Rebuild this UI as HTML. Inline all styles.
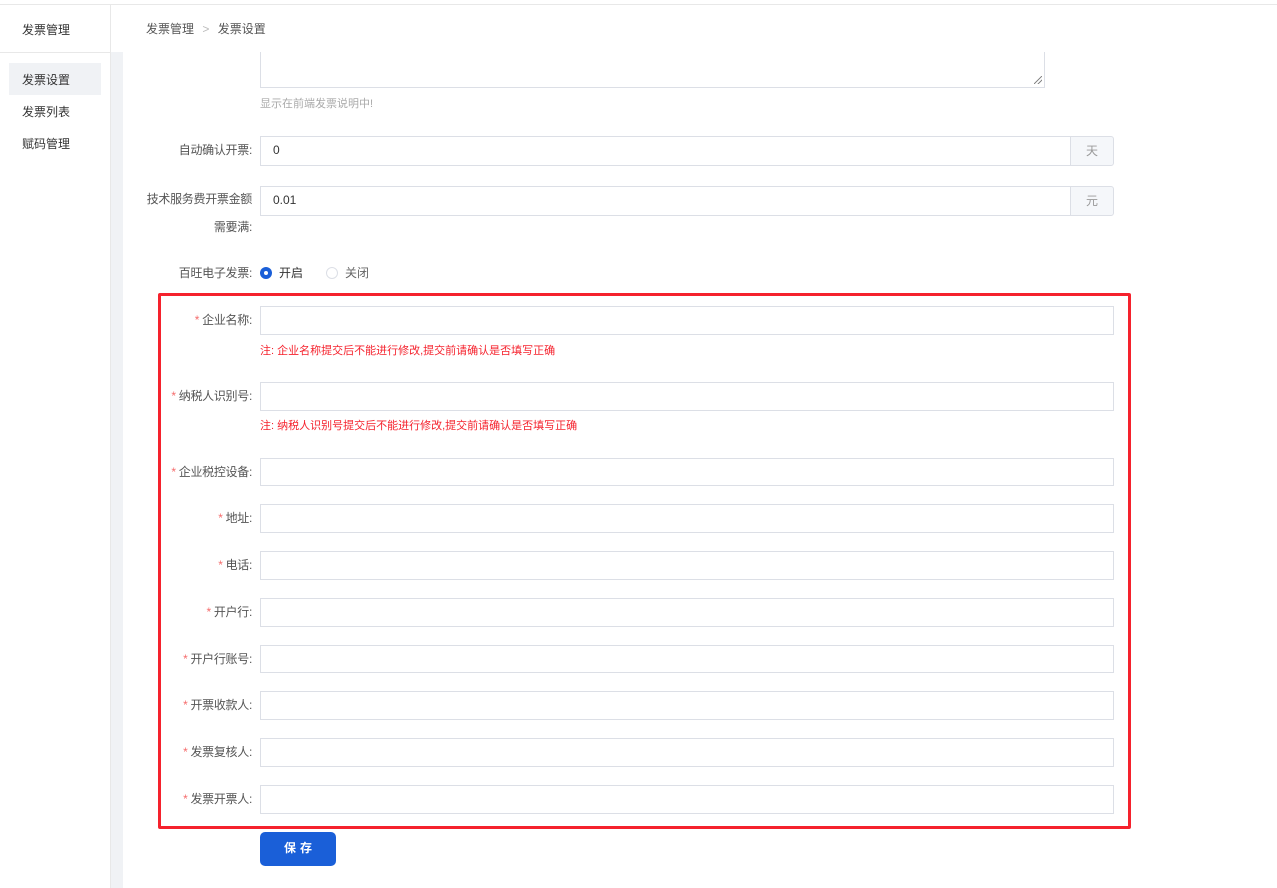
<!DOCTYPE html>
<html><head><meta charset="utf-8"><style>
*{margin:0;padding:0;box-sizing:border-box}
body{width:1277px;height:888px;background:#fff;font-family:"Liberation Sans","Noto Sans CJK SC",sans-serif;font-size:12px;color:#333;position:relative;overflow:hidden}
.a{position:absolute}
.inp{position:absolute;left:260px;width:854px;border:1px solid #dcdfe6;background:#fff}
.lbl{position:absolute;right:1025px;text-align:right;white-space:nowrap;color:#555;font-size:12px;letter-spacing:-0.3px}
.lbl b{color:#f56c6c;font-weight:normal;margin-right:3px}
.note{position:absolute;left:260px;color:#f5222d;font-size:11px}
.add{position:absolute;left:1070px;width:44px;height:30px;border:1px solid #dcdfe6;background:#f5f7fa;border-radius:0 3px 3px 0;color:#999;text-align:center;line-height:28px}
</style></head><body>
<div class="a" style="left:0;top:4px;width:1277px;height:1px;background:#e8e8e8"></div>
<div class="a" style="left:110px;top:5px;width:1px;height:883px;background:#e8e8e8"></div>
<div class="a" style="left:0;top:52px;width:110px;height:1px;background:#e8e8e8"></div>
<div class="a" style="left:111px;top:52px;width:12px;height:836px;background:#f0f2f5"></div>
<div class="a" style="left:22px;top:21px;color:#333">发票管理</div>
<div class="a" style="left:9px;top:63px;width:92px;height:32px;background:#f0f2f5"></div>
<div class="a" style="left:22px;top:71px">发票设置</div>
<div class="a" style="left:22px;top:103px">发票列表</div>
<div class="a" style="left:22px;top:135px">赋码管理</div>
<div class="a" style="left:146px;top:20px;color:#555">发票管理 <span style="color:#bbb;margin:0 5px">&gt;</span> 发票设置</div>

<div class="a" style="left:260px;top:52px;width:785px;height:36px;border:1px solid #dcdfe6;border-top:none"></div>
<div class="a" style="left:1034px;top:76px;width:8px;height:8px;background:linear-gradient(135deg,transparent 45%,#888 45%,#888 55%,transparent 55%,transparent 70%,#888 70%,#888 80%,transparent 80%)"></div>
<div class="a" style="left:260px;top:95px;color:#aaa;font-size:11px">显示在前端发票说明中!</div>

<div class="lbl" style="top:141px">自动确认开票:</div>
<div class="inp" style="top:136px;height:30px;width:811px;padding-left:12px;line-height:27px">0</div>
<div class="add" style="top:136px">天</div>

<div class="lbl" style="top:185px;line-height:28px">技术服务费开票金额<br>需要满:</div>
<div class="inp" style="top:186px;height:30px;width:811px;padding-left:12px;line-height:27px">0.01</div>
<div class="add" style="top:186px">元</div>

<div class="lbl" style="top:264px">百旺电子发票:</div>
<div class="a" style="left:260px;top:267px;width:12px;height:12px;border-radius:50%;background:#1a5fd8"><div class="a" style="left:4px;top:4px;width:4px;height:4px;border-radius:50%;background:#fff"></div></div>
<div class="a" style="left:279px;top:264px">开启</div>
<div class="a" style="left:326px;top:267px;width:12px;height:12px;border-radius:50%;border:1px solid #dcdfe6"></div>
<div class="a" style="left:345px;top:264px;color:#666">关闭</div>

<div class="a" style="left:158px;top:293px;width:973px;height:536px;border:3px solid #f5222d;border-radius:2px"></div>

<div class="lbl" style="top:311px"><b>*</b>企业名称:</div>
<div class="inp" style="top:306px;height:29px"></div>
<div class="note" style="top:342px">注: 企业名称提交后不能进行修改,提交前请确认是否填写正确</div>
<div class="lbl" style="top:387px"><b>*</b>纳税人识别号:</div>
<div class="inp" style="top:382px;height:29px"></div>
<div class="note" style="top:417px">注: 纳税人识别号提交后不能进行修改,提交前请确认是否填写正确</div>
<div class="lbl" style="top:463px"><b>*</b>企业税控设备:</div>
<div class="inp" style="top:458px;height:28px"></div>
<div class="lbl" style="top:509px"><b>*</b>地址:</div>
<div class="inp" style="top:504px;height:29px"></div>
<div class="lbl" style="top:556px"><b>*</b>电话:</div>
<div class="inp" style="top:551px;height:29px"></div>
<div class="lbl" style="top:603px"><b>*</b>开户行:</div>
<div class="inp" style="top:598px;height:29px"></div>
<div class="lbl" style="top:650px"><b>*</b>开户行账号:</div>
<div class="inp" style="top:645px;height:28px"></div>
<div class="lbl" style="top:696px"><b>*</b>开票收款人:</div>
<div class="inp" style="top:691px;height:29px"></div>
<div class="lbl" style="top:743px"><b>*</b>发票复核人:</div>
<div class="inp" style="top:738px;height:29px"></div>
<div class="lbl" style="top:790px"><b>*</b>发票开票人:</div>
<div class="inp" style="top:785px;height:29px"></div>

<div class="a" style="left:260px;top:832px;width:76px;height:34px;background:#1a5fd8;border-radius:5px;color:#fff;text-align:center;line-height:32px;font-size:12px;font-weight:bold;letter-spacing:4px;padding-left:4px">保存</div>
</body></html>
